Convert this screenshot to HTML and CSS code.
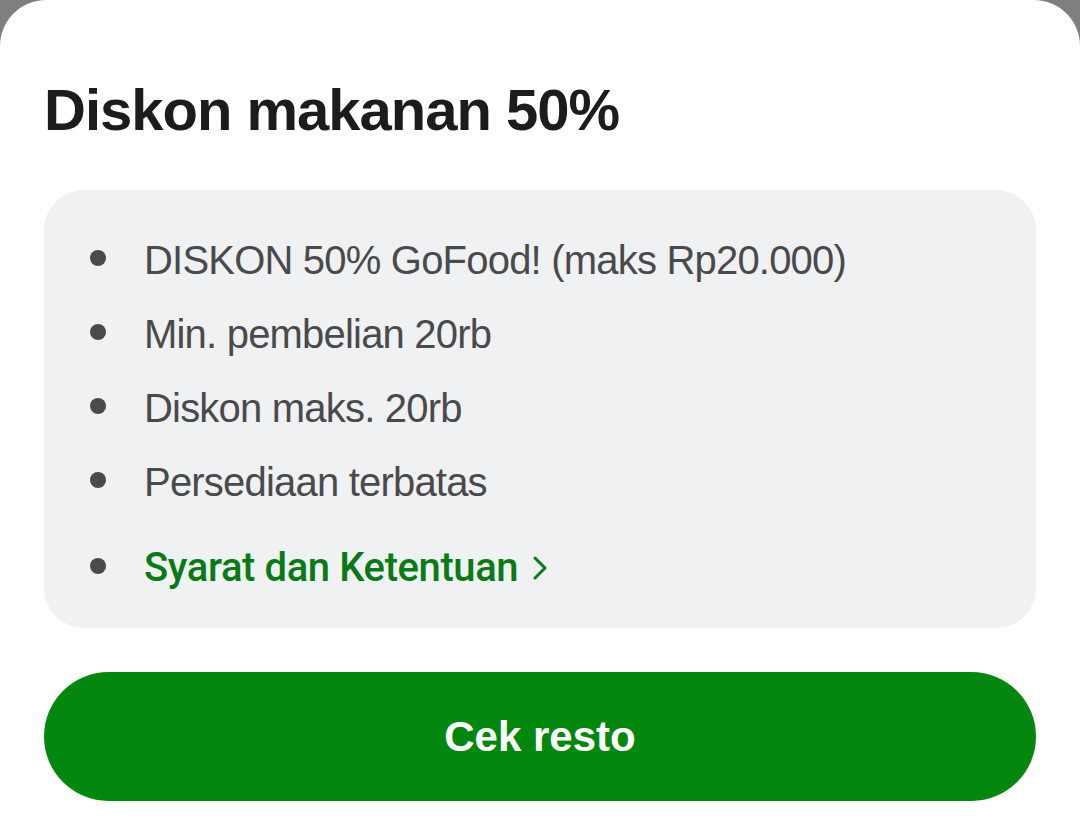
FILE: index.html
```html
<!DOCTYPE html>
<html lang="id">
<head>
<meta charset="utf-8">
<title>Diskon makanan 50%</title>
<link rel="stylesheet" href="styles.css">
</head>
<body>
<div class="sheet">
  <h1 class="title">Diskon makanan 50%</h1>
  <div class="info">
    <ul class="terms">
      <li class="term"><span class="dot"></span><span>DISKON 50% GoFood! (maks Rp20.000)</span></li>
      <li class="term"><span class="dot"></span><span>Min. pembelian 20rb</span></li>
      <li class="term"><span class="dot"></span><span>Diskon maks. 20rb</span></li>
      <li class="term"><span class="dot"></span><span>Persediaan terbatas</span></li>
      <li class="term term-link"><span class="dot"></span><a class="link" href="#">Syarat dan Ketentuan<svg class="chev" width="16" height="26" viewBox="0 0 16 26"><path d="M3 3 L13 13 L3 23" fill="none" stroke="currentColor" stroke-width="3" stroke-linecap="round" stroke-linejoin="round"/></svg></a></li>
    </ul>
  </div>
  <button class="cta">Cek resto</button>
</div>
</body>
</html>
```
FILE: styles.css
```css
html, body {
  margin: 0;
  padding: 0;
  height: 100%;
  background: #7f7f7f;
}
body {
  font-family: "Liberation Sans", Arial, sans-serif;
  overflow: hidden;
}
.sheet {
  box-sizing: border-box;
  height: 100%;
  background: #ffffff;
  border-radius: 46px 46px 0 0;
  padding: 76px 44px 0 44px;
}
.title {
  margin: 0;
  font-size: 58px;
  line-height: 68px;
  font-weight: 700;
  color: #1c1c1c;
  letter-spacing: -1px;
}
.info {
  margin-top: 46px;
  background: #f0f1f3;
  border-radius: 40px;
  padding: 46px 40px 36px 46px;
}
.terms {
  list-style: none;
  margin: 0;
  padding: 0;
  display: flex;
  flex-direction: column;
  gap: 26px;
}
.term {
  display: flex;
  align-items: center;
  gap: 38px;
  font-size: 40px;
  line-height: 48px;
  color: #4a4a4c;
  letter-spacing: -0.8px;
}
.term-link {
  margin-top: 12px;
}
.dot {
  width: 16px;
  height: 16px;
  border-radius: 50%;
  background: #4a4a4c;
  flex: none;
  position: relative;
  top: -2px;
}
.link {
  color: #0a7a16;
  text-decoration: none;
  font-family: Roboto, "Liberation Sans", sans-serif;
  font-weight: 500;
  display: flex;
  align-items: center;
  gap: 14px;
  letter-spacing: -0.4px;
}
.chev {
  color: #0a7a16;
}
.cta {
  display: block;
  width: 100%;
  margin-top: 44px;
  height: 129px;
  border: none;
  border-radius: 65px;
  background: #04870f;
  color: #ffffff;
  font-family: "Liberation Sans", Arial, sans-serif;
  font-size: 42px;
  font-weight: 700;
}
```
